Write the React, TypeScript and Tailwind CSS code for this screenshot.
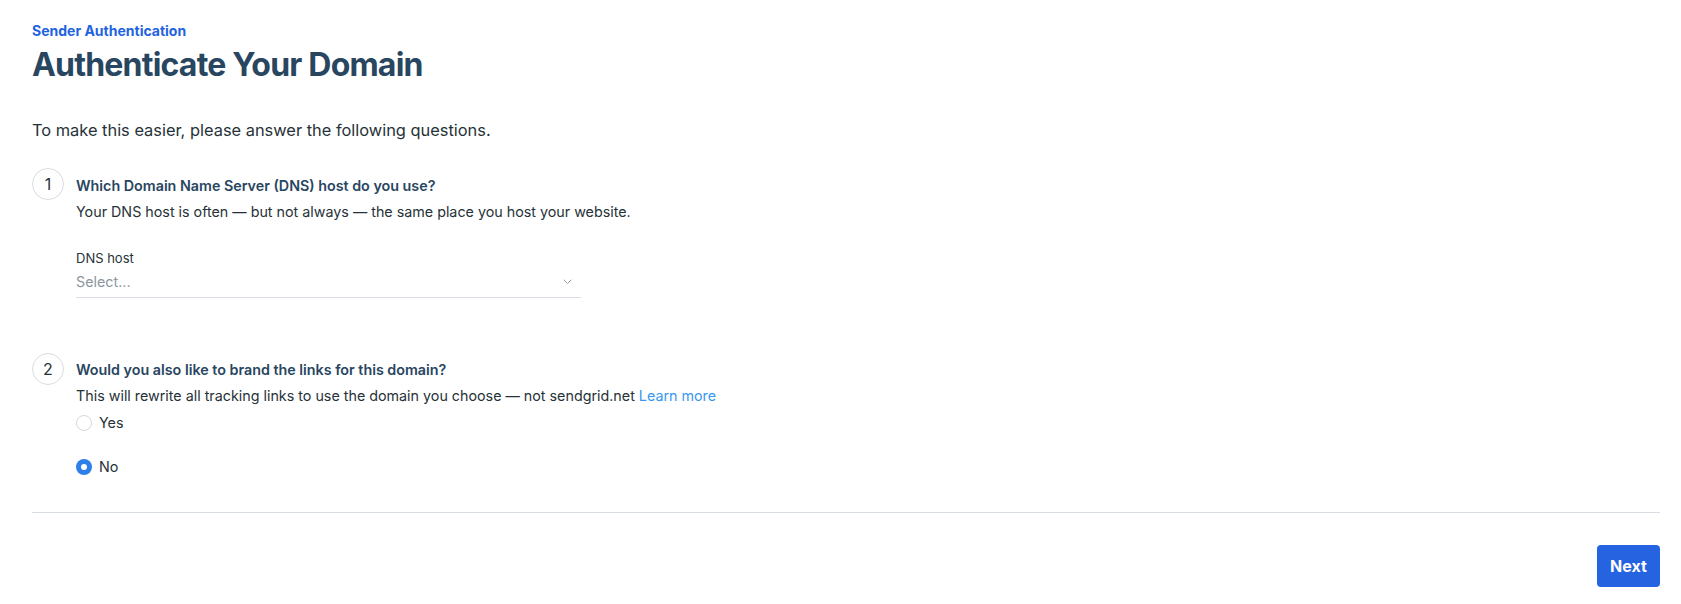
import React, { useState } from 'react';

function StepBadge({ n }: { n: number }) {
  return (
    <div className="w-8 h-8 shrink-0 rounded-full border border-[#d8dde3] flex items-center justify-center text-[16px] text-[#263238]">
      {n}
    </div>
  );
}

function Radio({ checked, label, onClick }: { checked: boolean; label: string; onClick: () => void }) {
  return (
    <button type="button" onClick={onClick} className="flex items-center gap-[7px] h-5 text-[14.3px] text-[#263238]">
      {checked ? (
        <span className="w-4 h-4 rounded-full bg-[#2f7fe8] flex items-center justify-center">
          <span className="w-[6px] h-[6px] rounded-full bg-white" />
        </span>
      ) : (
        <span className="w-4 h-4 rounded-full border border-[#d3d8de] bg-white" />
      )}
      {label}
    </button>
  );
}

export default function App() {
  const [brandLinks, setBrandLinks] = useState(false);

  return (
    <main className="min-h-[604px] bg-white pl-8 pr-[21px] pt-[21px] font-['Inter',sans-serif]">
      <p className="text-[14px] leading-5 font-bold text-[#1f63e0]">Sender Authentication</p>
      <h1 className="mt-1 text-[32px] leading-10 font-bold tracking-[-0.8px] text-[#294661]">
        Authenticate Your Domain
      </h1>

      <p className="mt-[33px] text-[16.4px] leading-6 text-[#263238]">
        To make this easier, please answer the following questions.
      </p>

      {/* Step 1: DNS host */}
      <section className="mt-[26px] flex gap-3">
        <StepBadge n={1} />
        <div className="pt-2">
          <h3 className="text-[14.3px] leading-5 font-semibold text-[#294661]">
            Which Domain Name Server (DNS) host do you use?
          </h3>
          <p className="mt-[6px] text-[14.3px] leading-5 text-[#263238]">
            Your DNS host is often — but not always — the same place you host your website.
          </p>
          <label className="block mt-7 text-[13px] leading-4 text-[#263238]">DNS host</label>
          <div className="mt-[6px] w-[505px] flex items-center justify-between border-b border-[#d8dde3] pb-[5px]">
            <span className="text-[14.3px] leading-5 text-[#8e969e]">Select...</span>
            <svg width="9" height="6" viewBox="0 0 9 6" fill="none" className="mr-[9px]">
              <path d="M1 1l3.5 3.5L8 1" stroke="#9aa3ad" strokeWidth="1" strokeLinecap="round" strokeLinejoin="round" />
            </svg>
          </div>
        </div>
      </section>

      {/* Step 2: link branding */}
      <section className="mt-[55px] flex gap-3">
        <StepBadge n={2} />
        <div className="pt-[7px]">
          <h3 className="text-[14.3px] leading-5 font-semibold text-[#294661]">
            Would you also like to brand the links for this domain?
          </h3>
          <p className="mt-1.5 text-[14.3px] leading-5 text-[#263238]">
            This will rewrite all tracking links to use the domain you choose — not sendgrid.net{' '}
            <a href="#" className="text-[#3a97ee]">Learn more</a>
          </p>
          <div className="mt-[7px] flex flex-col items-start gap-6">
            <Radio checked={brandLinks} label="Yes" onClick={() => setBrandLinks(true)} />
            <Radio checked={!brandLinks} label="No" onClick={() => setBrandLinks(false)} />
          </div>
        </div>
      </section>

      <div className="mt-[35px] border-t border-[#d8dde3]" />

      <div className="mt-8 flex justify-end">
        <button type="button" className="w-[63px] h-[42px] rounded-[4px] bg-[#2563e0] text-white text-[16px] font-bold">
          Next
        </button>
      </div>
    </main>
  );
}
